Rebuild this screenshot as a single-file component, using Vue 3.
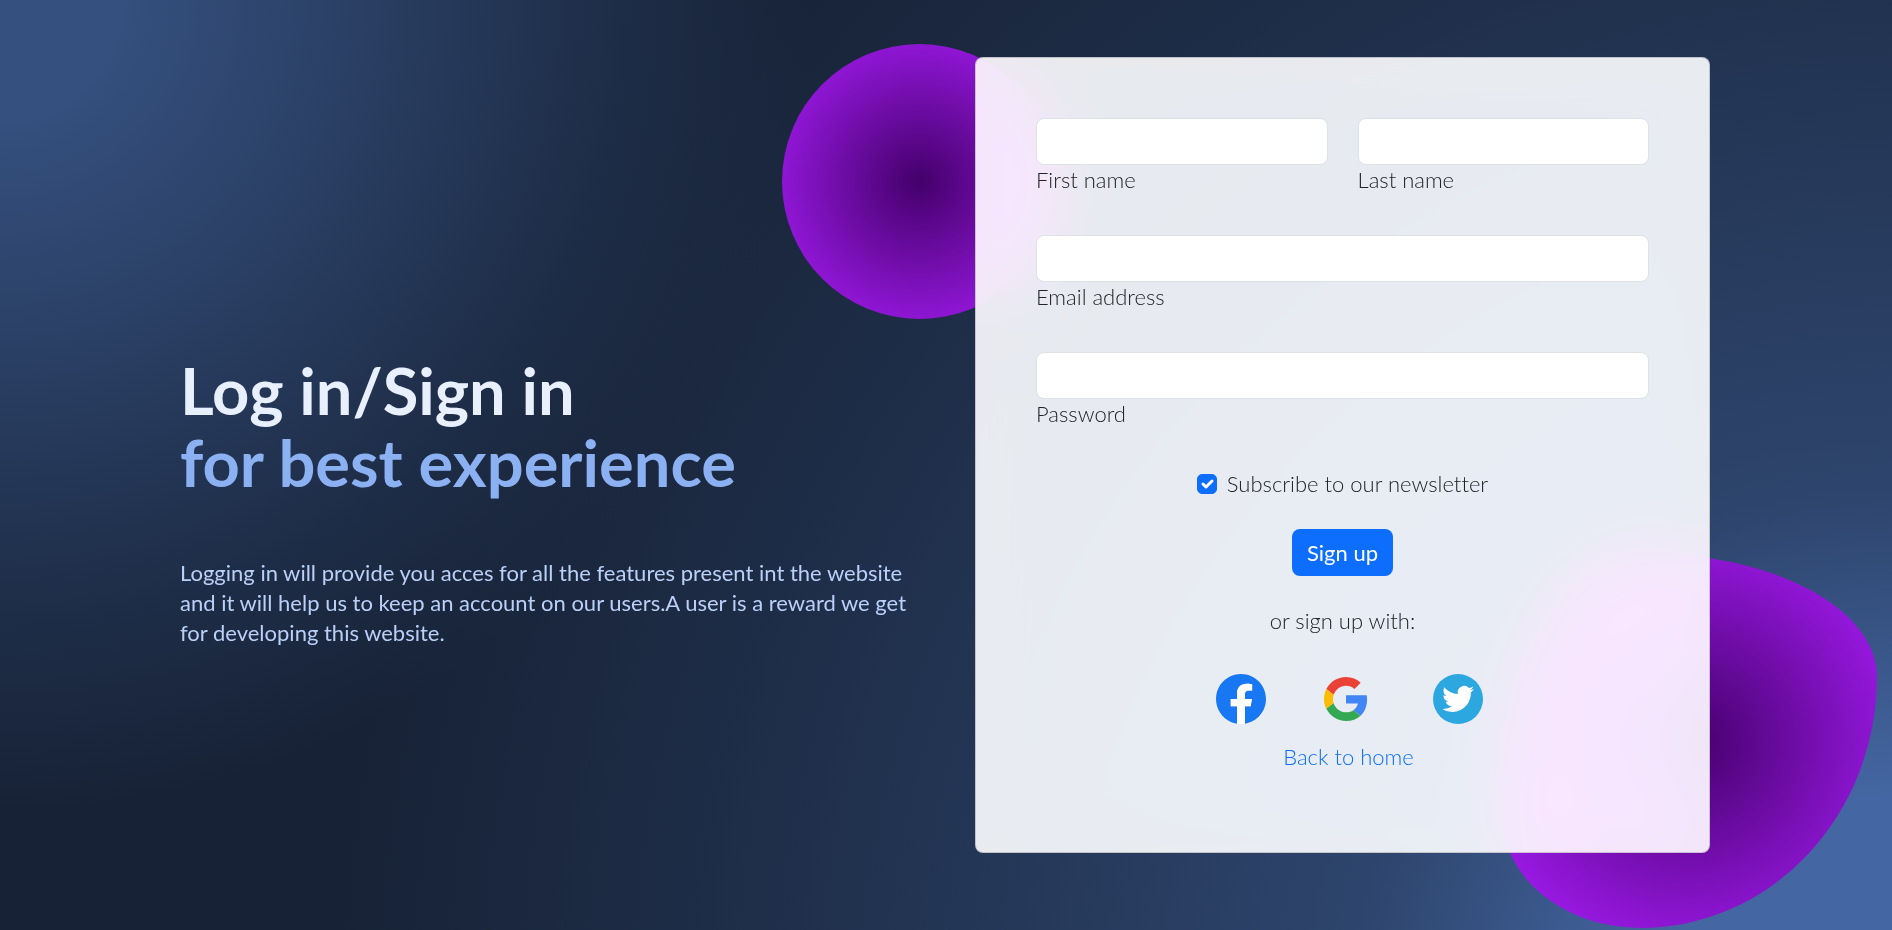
<script setup>
import { reactive } from 'vue'

const form = reactive({
  firstName: '',
  lastName: '',
  email: '',
  password: '',
  newsletter: true,
})
</script>

<template>
  <main class="page">
    <div class="container">
      <section class="intro">
        <h1>Log in/Sign in <br /><span>for best experience</span></h1>
        <p>
          Logging in will provide you acces for all the features present int the website
          and it will help us to keep an account on our users.A user is a reward we get
          for developing this website.
        </p>
      </section>

      <section class="panel">
        <div class="shape circle"></div>
        <div class="shape blob"></div>

        <form class="card" @submit.prevent>
          <div class="name-row">
            <div class="field">
              <input id="first-name" v-model="form.firstName" type="text" />
              <label for="first-name">First name</label>
            </div>
            <div class="field">
              <input id="last-name" v-model="form.lastName" type="text" />
              <label for="last-name">Last name</label>
            </div>
          </div>
          <div class="field">
            <input id="email" v-model="form.email" type="email" />
            <label for="email">Email address</label>
          </div>
          <div class="field">
            <input id="password" v-model="form.password" type="password" />
            <label for="password">Password</label>
          </div>

          <div class="check">
            <span class="box">
              <input id="newsletter" v-model="form.newsletter" type="checkbox" />
              <svg viewBox="0 0 20 20" aria-hidden="true"><path d="M6 10l3 3 6-6" /></svg>
            </span>
            <label for="newsletter">Subscribe to our newsletter</label>
          </div>

          <button class="submit" type="submit">Sign up</button>

          <p class="or">or sign up with:</p>

          <div class="social">
            <a href="#facebook" aria-label="Facebook">
              <svg width="50" height="50" viewBox="0 0 1024 1024">
                <path fill="#1877f2" d="M1024,512C1024,229.2,794.8,0,512,0S0,229.2,0,512c0,255.6,187.2,467.4,432,505.8V660H302V512h130V399.2C432,270.9,508.4,200,625.4,200c56,0,114.6,10,114.6,10v126h-64.6c-63.6,0-83.4,39.5-83.4,80v96h142l-22.7,148H592v357.8C836.8,979.4,1024,767.6,1024,512z" />
                <path fill="#fff" d="M711.3,660L734,512H592v-96c0-40.5,19.8-80,83.4-80H740V210c0,0-58.6-10-114.6-10C508.4,200,432,270.9,432,399.2V512H302v148h130v357.8c26.1,4.1,52.8,6.2,80,6.2s53.9-2.1,80-6.2V660H711.3z" />
              </svg>
            </a>
            <a class="google" href="#google" aria-label="Google">
              <svg width="44" height="44" viewBox="0 0 48 48">
                <path fill="#ea4335" d="M24 9.5c3.54 0 6.71 1.22 9.21 3.6l6.85-6.85C35.9 2.38 30.47 0 24 0 14.62 0 6.51 5.38 2.56 13.22l7.98 6.19C12.43 13.72 17.74 9.5 24 9.5z" />
                <path fill="#4285f4" d="M46.98 24.55c0-1.57-.15-3.09-.38-4.55H24v9.02h12.94c-.58 2.96-2.26 5.48-4.78 7.18l7.73 6c4.51-4.18 7.09-10.36 7.09-17.65z" />
                <path fill="#fbbc05" d="M10.53 28.59c-.48-1.45-.76-2.99-.76-4.59s.27-3.14.76-4.59l-7.98-6.19C.92 16.46 0 20.12 0 24c0 3.88.92 7.54 2.56 10.78l7.97-6.19z" />
                <path fill="#34a853" d="M24 48c6.48 0 11.93-2.13 15.89-5.81l-7.73-6c-2.15 1.45-4.92 2.3-8.16 2.3-6.26 0-11.57-4.22-13.47-9.91l-7.98 6.19C6.51 42.62 14.62 48 24 48z" />
              </svg>
            </a>
            <a href="#twitter" aria-label="Twitter">
              <svg width="50" height="50" viewBox="0 0 50 50">
                <circle cx="25" cy="25" r="25" fill="#2ca7e0" />
                <path fill="#fff" transform="translate(9.2 9) scale(1.33)" d="M23.953 4.57a10 10 0 01-2.825.775 4.958 4.958 0 002.163-2.723c-.951.555-2.005.959-3.127 1.184a4.92 4.92 0 00-8.384 4.482C7.69 8.095 4.067 6.13 1.64 3.162a4.822 4.822 0 00-.666 2.475c0 1.71.87 3.213 2.188 4.096a4.904 4.904 0 01-2.228-.616v.06a4.923 4.923 0 003.946 4.827 4.996 4.996 0 01-2.212.085 4.936 4.936 0 004.604 3.417 9.867 9.867 0 01-6.102 2.105c-.39 0-.779-.023-1.17-.067a13.995 13.995 0 007.557 2.209c9.053 0 13.998-7.496 13.998-13.985 0-.21 0-.42-.015-.63A9.935 9.935 0 0024 4.59z" />
              </svg>
            </a>
          </div>

          <a class="home" href="#home">Back to home</a>
        </form>
      </section>
    </div>
  </main>
</template>

<style>
body {
  margin: 0;
}
</style>

<style scoped>
* {
  box-sizing: border-box;
}

.page {
  min-height: 100vh;
  padding: 57px 0 60px;
  overflow: hidden;
  font: 400 22px/30px Lato, "Open Sans", sans-serif;
  font-variant-ligatures: none;
  color: #212529;
  background-color: hsl(218, 41%, 15%);
  background-image:
    radial-gradient(812px circle at 0% 0%,
      hsl(218, 41%, 35%) 15%,
      hsl(218, 41%, 30%) 35%,
      hsl(218, 41%, 20%) 75%,
      hsl(218, 41%, 19%) 80%,
      transparent 100%),
    radial-gradient(1562px circle at 100% 111%,
      hsl(218, 41%, 45%) 15%,
      hsl(218, 41%, 30%) 35%,
      hsl(218, 41%, 20%) 75%,
      hsl(218, 41%, 19%) 80%,
      transparent 100%);
}

.container {
  display: grid;
  grid-template-columns: 1fr 1fr;
  gap: 60px;
  align-items: center;
  max-width: 1652px;
  margin: 0 auto;
  padding: 0 62px 0 60px;
}

.intro {
  margin-top: 92px;
}

.intro h1 {
  margin: 0 0 60px;
  font-size: 65px;
  line-height: 72px;
  font-weight: 700;
  color: hsl(218, 81%, 95%);
}

.intro h1 span {
  color: hsl(218, 81%, 75%);
}

.intro p {
  margin: 0;
  color: hsl(218, 81%, 85%);
}

.panel {
  position: relative;
}

.shape {
  position: absolute;
  background: radial-gradient(#44006b, #ad1fff);
}

.circle {
  top: -13px;
  left: -193px;
  width: 275px;
  height: 275px;
  border-radius: 50%;
}

.blob {
  right: -167px;
  bottom: -75px;
  width: 375px;
  height: 375px;
  border-radius: 38% 62% 63% 37% / 70% 33% 67% 30%;
}

.card {
  position: relative;
  padding: 60px 60px 80px;
  text-align: center;
  font-weight: 300;
  background-color: hsla(0, 0%, 100%, 0.9);
  backdrop-filter: saturate(200%) blur(31px);
  border: 1px solid rgba(0, 0, 0, 0.17);
  border-radius: 8px;
}

.name-row {
  display: grid;
  grid-template-columns: 1fr 1fr;
  gap: 30px;
}

.field {
  margin-bottom: 40px;
  text-align: left;
}

.field input {
  display: block;
  width: 100%;
  height: 47px;
  padding: 8px 15px;
  font: inherit;
  color: inherit;
  background: #fff;
  border: 1px solid #dee2e6;
  border-radius: 8px;
}

.field label {
  display: block;
}

.check {
  display: flex;
  justify-content: center;
  align-items: center;
  gap: 10px;
  margin-bottom: 30px;
}

.box {
  position: relative;
  width: 20px;
  height: 20px;
}

.box input {
  display: block;
  appearance: none;
  width: 20px;
  height: 20px;
  margin: 0;
  background: #fff;
  border: 1px solid #dee2e6;
  border-radius: 5px;
}

.box input:checked {
  background: #0d6efd;
  border-color: #0d6efd;
}

.box svg {
  position: absolute;
  inset: 0;
  fill: none;
  stroke: #fff;
  stroke-width: 3;
  stroke-linecap: round;
  stroke-linejoin: round;
  pointer-events: none;
}

.submit {
  display: block;
  height: 47px;
  margin: 0 auto 30px;
  padding: 0 15px;
  font: inherit;
  font-weight: 400;
  color: #fff;
  background: #0d6efd;
  border: 0;
  border-radius: 8px;
}

.or {
  margin: 0 0 38px;
}

.social {
  display: flex;
  justify-content: center;
  align-items: center;
  margin-bottom: 18px;
  padding-left: 14px;
}

.social svg {
  display: block;
}

.google {
  margin: 0 65px 0 58px;
}

.home {
  display: block;
  width: fit-content;
  margin: 0 auto;
  padding-left: 12px;
  color: #0d6efd;
  text-decoration: none;
}
</style>
